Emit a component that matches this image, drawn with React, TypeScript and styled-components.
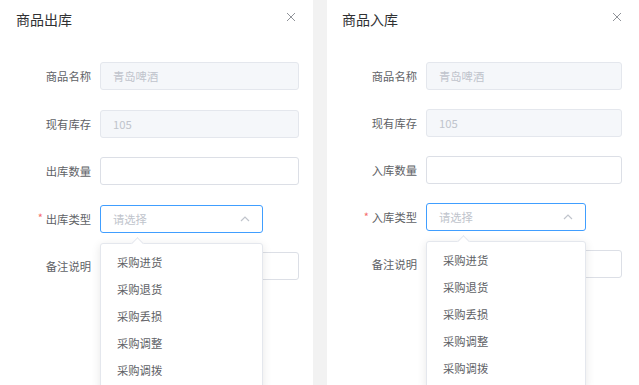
import React from "react";
import styled, { createGlobalStyle } from "styled-components";

const GlobalStyle = createGlobalStyle`
  html, body {
    margin: 0;
    padding: 0;
    background: #f2f2f2;
    overflow: hidden;
  }
  body {
    font-family: "Noto Sans CJK SC", "Noto Sans", "Liberation Sans", sans-serif;
  }
`;

const Page = styled.div`
  display: flex;
  width: 639px;
  height: 385px;
  gap: 14px;
  background: #f2f2f2;
  overflow: hidden;
`;

const Panel = styled.div<{ $width: number }>`
  position: relative;
  width: ${({ $width }) => $width}px;
  height: 385px;
  background: #fff;
  flex-shrink: 0;
`;

const Header = styled.div<{ $padLeft: number }>`
  display: flex;
  align-items: center;
  justify-content: space-between;
  height: 20px;
  padding: 9px 16px 0 ${({ $padLeft }) => $padLeft}px;
`;

const Title = styled.span`
  font-size: 14px;
  line-height: 20px;
  color: #303133;
`;

const CloseButton = styled.span`
  display: flex;
  align-items: center;
  justify-content: center;
  width: 12px;
  height: 12px;
  margin-top: -5px;
`;

const Form = styled.div<{ $rowGap: number }>`
  display: flex;
  flex-direction: column;
  gap: ${({ $rowGap }) => $rowGap}px;
  padding-top: 33px;
`;

const Row = styled.div<{ $labelWidth: number; $padRight: number }>`
  display: grid;
  grid-template-columns: ${({ $labelWidth }) => $labelWidth}px 1fr;
  column-gap: 9px;
  align-items: center;
  height: 28px;
  padding-right: ${({ $padRight }) => $padRight}px;
`;

const Label = styled.span`
  display: flex;
  justify-content: flex-end;
  align-items: center;
  gap: 3px;
  font-size: 11.3px;
  color: #606266;
  white-space: nowrap;
`;

const Star = styled.span`
  color: #f56c6c;
  font-size: 11px;
  margin-top: -3px;
`;

const Input = styled.div<{ $disabled?: boolean }>`
  box-sizing: border-box;
  height: 28px;
  display: flex;
  align-items: center;
  padding: 0 12px;
  border: 1px solid #dcdfe6;
  border-color: ${({ $disabled }) => ($disabled ? "#e4e7ed" : "#dcdfe6")};
  border-radius: 3px;
  background: ${({ $disabled }) => ($disabled ? "#f5f7fa" : "#fff")};
  color: #c0c4cc;
  font-size: 11.3px;
`;

const SelectBox = styled.div<{ $width: number }>`
  position: relative;
  width: ${({ $width }) => $width}px;
`;

const SelectInput = styled.div`
  box-sizing: border-box;
  height: 28px;
  display: flex;
  align-items: center;
  justify-content: space-between;
  padding: 0 12px;
  border: 1px solid #409eff;
  border-radius: 3px;
  background: #fff;
  color: #c0c4cc;
  font-size: 11.3px;
`;

const Dropdown = styled.div`
  position: absolute;
  z-index: 2;
  top: 38px;
  left: 0;
  right: 0;
  box-sizing: border-box;
  padding: 5px 0;
  background: #fff;
  border: 1px solid #e4e7ed;
  border-radius: 3px;
  box-shadow: 0 2px 10px rgba(0, 0, 0, 0.1);
`;

const Arrow = styled.span`
  position: absolute;
  top: -5px;
  left: 32px;
  width: 8px;
  height: 8px;
  background: #fff;
  border-left: 1px solid #e4e7ed;
  border-top: 1px solid #e4e7ed;
  transform: rotate(45deg);
`;

const Option = styled.div`
  height: 27px;
  line-height: 27px;
  padding-left: 16px;
  font-size: 11.3px;
  color: #606266;
`;

const options = ["采购进货", "采购退货", "采购丢损", "采购调整", "采购调拨"];

const CloseIcon = () => (
  <svg width="10" height="10" viewBox="0 0 10 10">
    <path d="M1 1 L9 9 M9 1 L1 9" stroke="#909399" strokeWidth="1" />
  </svg>
);

const ChevronUp = () => (
  <svg width="10" height="6" viewBox="0 0 10 6">
    <path d="M1 5 L5 1 L9 5" fill="none" stroke="#c0c4cc" strokeWidth="1.2" />
  </svg>
);

interface StockDialogProps {
  title: string;
  kind: string;
  width: number;
  padLeft: number;
  labelWidth: number;
  padRight: number;
  rowGap: number;
  selectWidth: number;
}

const StockDialog = ({
  title,
  kind,
  width,
  padLeft,
  labelWidth,
  padRight,
  rowGap,
  selectWidth,
}: StockDialogProps) => (
  <Panel $width={width}>
    <Header $padLeft={padLeft}>
      <Title>{title}</Title>
      <CloseButton>
        <CloseIcon />
      </CloseButton>
    </Header>
    <Form $rowGap={rowGap}>
      <Row $labelWidth={labelWidth} $padRight={padRight}>
        <Label>商品名称</Label>
        <Input $disabled>青岛啤酒</Input>
      </Row>
      <Row $labelWidth={labelWidth} $padRight={padRight}>
        <Label>现有库存</Label>
        <Input $disabled>105</Input>
      </Row>
      <Row $labelWidth={labelWidth} $padRight={padRight}>
        <Label>{kind}数量</Label>
        <Input />
      </Row>
      <Row $labelWidth={labelWidth} $padRight={padRight}>
        <Label>
          <Star>*</Star>
          {kind}类型
        </Label>
        <SelectBox $width={selectWidth}>
          <SelectInput>
            <span>请选择</span>
            <ChevronUp />
          </SelectInput>
          <Dropdown>
            <Arrow />
            {options.map((o) => (
              <Option key={o}>{o}</Option>
            ))}
          </Dropdown>
        </SelectBox>
      </Row>
      <Row $labelWidth={labelWidth} $padRight={padRight}>
        <Label>备注说明</Label>
        <Input />
      </Row>
    </Form>
  </Panel>
);

export default function App() {
  return (
    <>
      <GlobalStyle />
      <Page>
        <StockDialog
          title="商品出库"
          kind="出库"
          width={313}
          padLeft={16}
          labelWidth={91}
          padRight={14}
          rowGap={19.5}
          selectWidth={163}
        />
        <StockDialog
          title="商品入库"
          kind="入库"
          width={312}
          padLeft={15}
          labelWidth={90}
          padRight={17}
          rowGap={19}
          selectWidth={160}
        />
      </Page>
    </>
  );
}
